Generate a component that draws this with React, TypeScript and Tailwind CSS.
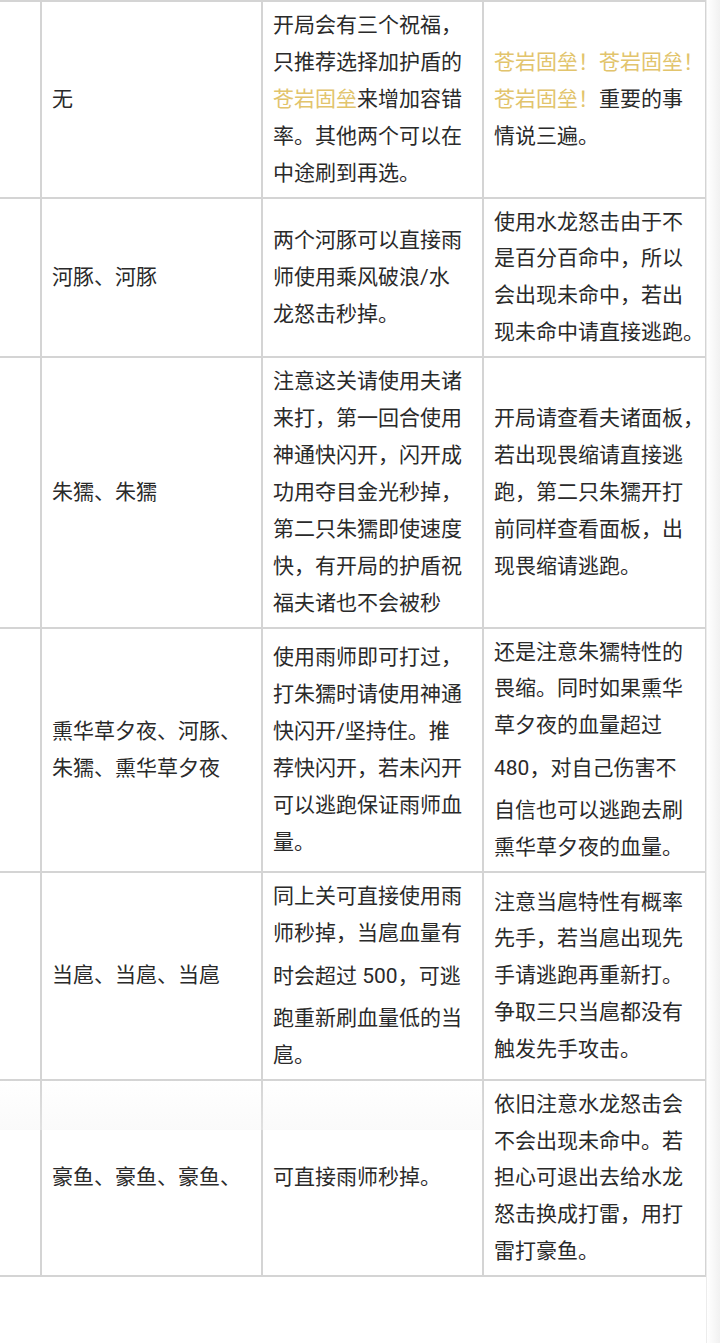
import React from 'react';

type Row = {
  name: string[];
  tip: string[];
  note: string[];
};

const rows: Row[] = [
  {
    name: ['无'],
    tip: ['开局会有三个祝福，', '只推荐选择加护盾的', '苍岩固垒来增加容错', '率。其他两个可以在', '中途刷到再选。'],
    note: ['苍岩固垒！苍岩固垒！', '苍岩固垒！重要的事', '情说三遍。'],
  },
  {
    name: ['河豚、河豚'],
    tip: ['两个河豚可以直接雨', '师使用乘风破浪/水', '龙怒击秒掉。'],
    note: ['使用水龙怒击由于不', '是百分百命中，所以', '会出现未命中，若出', '现未命中请直接逃跑。'],
  },
  {
    name: ['朱獳、朱獳'],
    tip: [
      '注意这关请使用夫诸',
      '来打，第一回合使用',
      '神通快闪开，闪开成',
      '功用夺目金光秒掉，',
      '第二只朱獳即使速度',
      '快，有开局的护盾祝',
      '福夫诸也不会被秒',
    ],
    note: ['开局请查看夫诸面板，', '若出现畏缩请直接逃', '跑，第二只朱獳开打', '前同样查看面板，出', '现畏缩请逃跑。'],
  },
  {
    name: ['熏华草夕夜、河豚、', '朱獳、熏华草夕夜'],
    tip: ['使用雨师即可打过，', '打朱獳时请使用神通', '快闪开/坚持住。推', '荐快闪开，若未闪开', '可以逃跑保证雨师血', '量。'],
    note: ['还是注意朱獳特性的', '畏缩。同时如果熏华', '草夕夜的血量超过', '480，对自己伤害不', '自信也可以逃跑去刷', '熏华草夕夜的血量。'],
  },
  {
    name: ['当扈、当扈、当扈'],
    tip: ['同上关可直接使用雨', '师秒掉，当扈血量有', '时会超过 500，可逃', '跑重新刷血量低的当', '扈。'],
    note: ['注意当扈特性有概率', '先手，若当扈出现先', '手请逃跑再重新打。', '争取三只当扈都没有', '触发先手攻击。'],
  },
  {
    name: ['豪鱼、豪鱼、豪鱼、'],
    tip: ['可直接雨师秒掉。'],
    note: ['依旧注意水龙怒击会', '不会出现未命中。若', '担心可退出去给水龙', '怒击换成打雷，用打', '雷打豪鱼。'],
  },
];

// 苍岩固垒 gets the gold colour, numbers sit a bit taller like in the source page
const renderLine = (line: string) =>
  line.split(/(苍岩固垒！?|\d+)/).map((part, i) => {
    if (!part) return null;
    if (part.startsWith('苍岩固垒')) {
      return (
        <span key={i} className="text-[#e2c46c]">
          {part}
        </span>
      );
    }
    if (/^\d+$/.test(part)) {
      return (
        <span key={i} className="leading-[48px]">
          {part}
        </span>
      );
    }
    return <React.Fragment key={i}>{part}</React.Fragment>;
  });

const Cell = ({ lines }: { lines: string[] }) => (
  <td className="border-2 border-[#d4d4d4] px-[10px] py-[5px] align-middle">
    {lines.map((line, i) => (
      <span key={i} className="block whitespace-nowrap">
        {renderLine(line)}
      </span>
    ))}
  </td>
);

export default function App() {
  return (
    <div
      className="relative flex h-[1343px] w-[720px] overflow-hidden bg-white text-[21px] leading-[36.9px] text-[#2a2a2a]"
      style={{ fontFamily: 'Roboto, "Noto Sans CJK SC", sans-serif' }}
    >
      <div className="w-[706px] shrink-0">
        <table className="w-[706px] table-fixed border-collapse border-l-0">
          <colgroup>
            <col className="w-[41px]" />
            <col className="w-[221px]" />
            <col className="w-[221px]" />
            <col className="w-[223px]" />
          </colgroup>
          <tbody>
            {rows.map((row, index) => (
              <tr key={index}>
                <td className="border-y-2 border-r-2 border-l-0 border-[#d4d4d4]" />
                <Cell lines={row.name} />
                <Cell lines={row.tip} />
                <Cell lines={row.note} />
              </tr>
            ))}
          </tbody>
        </table>
      </div>

      {/* scroll shadow on the right edge */}
      <div className="flex-1 border-l border-[#ececec] bg-gradient-to-r from-white to-[#f1f1f1]" />

      {/* faint toolbar shadow over the last row */}
      <div className="pointer-events-none absolute left-0 top-[1078px] h-[52px] w-[483px] bg-gradient-to-b from-transparent to-[#f3f3f3]/40" />
    </div>
  );
}
